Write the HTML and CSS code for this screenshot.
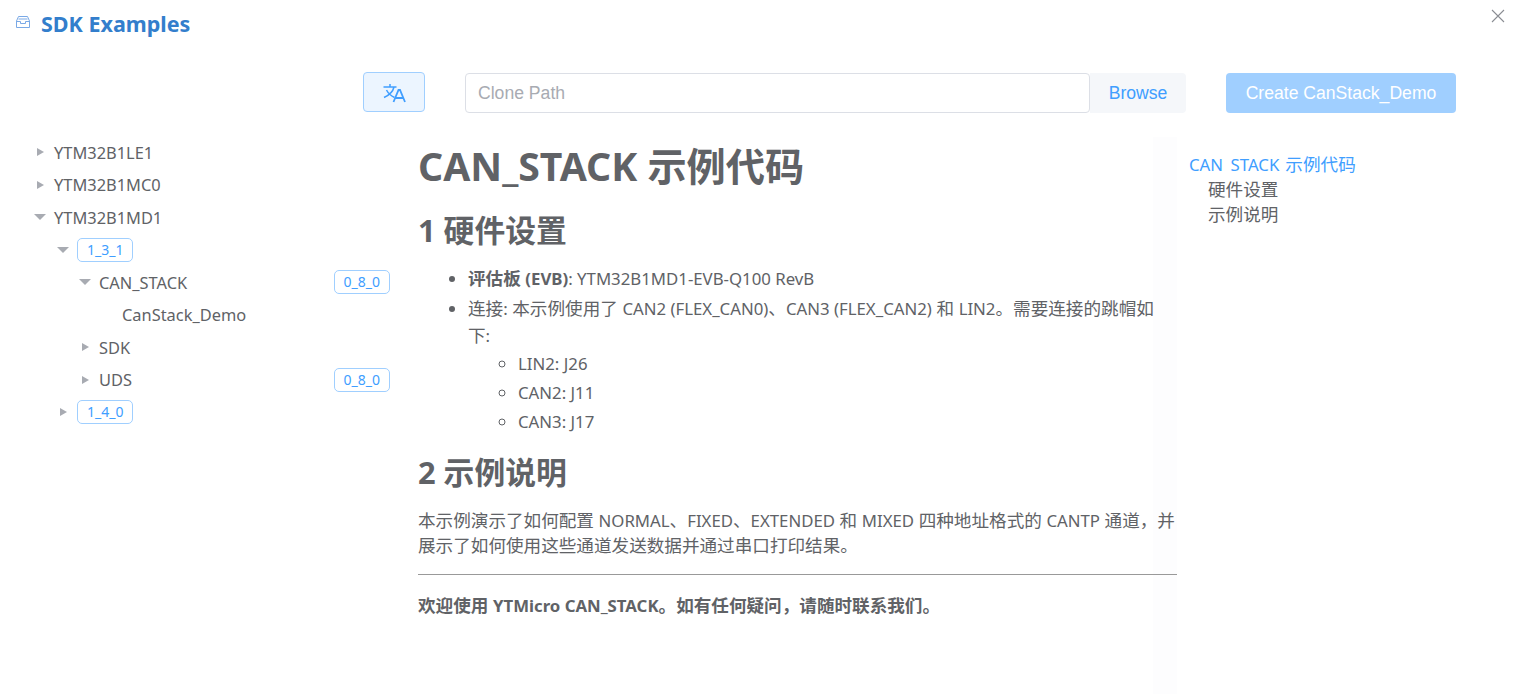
FILE: index.html
```html
<!DOCTYPE html>
<html lang="zh">
<head>
<meta charset="utf-8">
<title>SDK Examples</title>
<link rel="stylesheet" href="styles.css">
</head>
<body>
<div class="dialog">
  <header class="head">
    <svg class="head-icon" viewBox="0 0 14 12" width="14" height="12"><path d="M2.500 .5h9l2 4.500v6.500H.5V5zM.5 5.500h4v2h5v-2h4M2.500 3h9" fill="none" stroke="#7aa9e6" stroke-width="1"/></svg>
    <h2 class="title">SDK Examples</h2>
    <svg class="close" viewBox="0 0 14 14" width="14" height="14"><path d="M1 1l12 12M13 1L1 13" stroke="#8a8d93" stroke-width="1.100" fill="none"/></svg>
  </header>
  <div class="toolbar">
    <button class="lang">
      <svg viewBox="0 0 24 24" width="24" height="24"><path d="M1.500 7h13M8 4v3M12 7c-1 4.500-4.500 8-10 10.500M4.500 10c1.500 3 4 5.500 8 7.500" fill="none" stroke="#409eff" stroke-width="1.500"/><path d="M11.500 22L16.500 10h1.500l5 12M13.500 18h8" fill="none" stroke="#409eff" stroke-width="1.800"/></svg>
    </button>
    <div class="path-group">
      <input class="path" placeholder="Clone Path">
      <button class="browse">Browse</button>
    </div>
    <button class="create">Create CanStack_Demo</button>
  </div>
  <main class="body">
    <nav class="tree">
      <div class="row d0"><i class="caret"></i><span>YTM32B1LE1</span></div>
      <div class="row d0"><i class="caret"></i><span>YTM32B1MC0</span></div>
      <div class="row d0"><i class="caret open"></i><span>YTM32B1MD1</span></div>
      <div class="row d1"><i class="caret open"></i><span class="tag">1_3_1</span></div>
      <div class="row d2"><i class="caret open"></i><span>CAN_STACK</span><span class="tag end">0_8_0</span></div>
      <div class="row d3"><i class="caret none"></i><span>CanStack_Demo</span></div>
      <div class="row d2"><i class="caret"></i><span>SDK</span></div>
      <div class="row d2"><i class="caret"></i><span>UDS</span><span class="tag end">0_8_0</span></div>
      <div class="row d1"><i class="caret"></i><span class="tag">1_4_0</span></div>
    </nav>
    <article class="doc">
      <h1>CAN_STACK 示例代码</h1>
      <h2>1 硬件设置</h2>
      <ul>
        <li><strong>评估板 <span class="en">(EVB)</span></strong><span class="en">: YTM32B1MD1-EVB-Q100 RevB</span></li>
        <li>连接<span class="en">:</span> 本示例使用了 <span class="en">CAN2 (FLEX_CAN0)</span>、<span class="en">CAN3 (FLEX_CAN2)</span> 和 <span class="en">LIN2</span>。需要连接的跳帽如<br>下<span class="en">:</span>
          <ul>
            <li class="en">LIN2: J26</li>
            <li class="en">CAN2: J11</li>
            <li class="en">CAN3: J17</li>
          </ul>
        </li>
      </ul>
      <h2 class="second">2 示例说明</h2>
      <p>本示例演示了如何配置 <span class="en">NORMAL</span>、<span class="en">FIXED</span>、<span class="en">EXTENDED</span> 和 <span class="en">MIXED</span> 四种地址格式的 <span class="en">CANTP</span> 通道，并展示了如何使用这些通道发送数据并通过串口打印结果。</p>
      <hr>
      <p class="closing"><strong>欢迎使用 <span class="en">YTMicro CAN_STACK</span>。如有任何疑问，请随时联系我们。</strong></p>
    </article>
    <aside class="toc">
      <a class="active"><span class="en">CAN<span class="rule-hidden">_</span>STACK</span> 示例代码</a>
      <a class="sub">硬件设置</a>
      <a class="sub">示例说明</a>
    </aside>
  </main>
</div>
</body>
</html>
```

FILE: styles.css
```css
* { box-sizing: border-box; }
html, body { margin: 0; height: 100%; overflow: hidden; background: #fff; }
body { font-family: "Noto Sans", "Noto Sans CJK SC", sans-serif; color: #606266; font-size: 16px; }
.dialog { width: 1517px; height: 694px; display: flex; flex-direction: column; }
.head { position: relative; height: 72px; display: flex; align-items: flex-start; padding: 9px 0 0 16px; gap: 11px; }
.head-icon { margin-top: 7px; }
.title { margin: 0; font-size: 21.500px; line-height: 29px; font-weight: 700; color: #337ecc; }
.close { position: absolute; left: 1491px; top: 9px; }
.toolbar { height: 41px; display: flex; align-items: flex-start; padding-left: 363px; font-family: "Liberation Sans", sans-serif; }
.lang { width: 62px; height: 40px; padding: 0; background: #ecf5ff; border: 1px solid #a0cfff; border-radius: 4px; display: flex; align-items: center; justify-content: center; }
.path-group { display: flex; margin: 1px 0 0 40px; width: 721px; height: 40px; }
.path { flex: 1; min-width: 0; height: 40px; border: 1px solid #dcdfe6; border-radius: 4px; padding: 0 12px; font: 17.600px "Liberation Sans", sans-serif; color: #606266; outline: none; }
.path::placeholder { color: #a8abb2; opacity: 1; }
.browse { width: 96px; height: 40px; border: 0; background: #f5f7fa; color: #409eff; border-radius: 0 4px 4px 0; font: 17.600px "Liberation Sans", sans-serif; padding: 0; }
.create { margin: 1px 0 0 40px; width: 230px; height: 40px; border: 0; border-radius: 4px; background: #a0cfff; color: #fff; font: 17.600px "Liberation Sans", sans-serif; padding: 0; }
.body { flex: 1; min-height: 0; display: grid; grid-template-columns: 418px 759px 1fr; }
.tree { padding-top: 23px; padding-right: 28px; }
.row { height: 32.500px; display: flex; align-items: center; font-size: 16.400px; color: #606266; }
.d0 { padding-left: 32px; }
.d1 { padding-left: 55px; }
.d2 { padding-left: 77px; }
.d3 { padding-left: 100px; }
.caret { width: 0; height: 0; flex: none; margin-right: 10px; margin-left: 5px; border-style: solid; border-width: 4.500px 0 4.500px 7px; border-color: transparent transparent transparent #a8abb2; }
.caret.open { margin-left: 2px; margin-right: 8px; border-width: 6.500px 6px 0; border-color: #a8abb2 transparent transparent; }
.caret.none { border-color: transparent; }
.tag { height: 24px; line-height: 22px; padding: 0 9px; border: 1px solid #a0cfff; border-radius: 5px; color: #409eff; font-size: 14px; background: #fff; }
.end { margin-left: auto; }
.en { font-size: 16.800px; }
.doc { padding-top: 28px; height: 100%; background: linear-gradient(#fdfdfe, #fdfdfe) no-repeat right bottom / 24px calc(100% - 24px); font-size: 17.600px; }
.doc h1 { margin: 0; font-size: 39.200px; line-height: 50px; font-weight: 700; }
.doc h2 { margin: 19px 0 0; font-size: 30.800px; line-height: 40px; font-weight: 700; }
.doc h2.second { margin-top: 17px; }
.doc ul { margin: 15px 0 0; padding-left: 50px; line-height: 26px; }
.doc ul ul { margin: 0; }
.doc li + li { margin-top: 3px; }
.doc ul ul li:first-child { margin-top: 2px; }
.doc p { margin: 16px 0 0; line-height: 25px; }
.doc hr { margin: 16px 0 0; border: 0; border-top: 1px solid #999; }
.doc p.closing { margin-top: 18px; }
.doc strong { font-weight: 700; }
.toc { padding: 39px 0 0 12px; display: flex; flex-direction: column; }
.toc a { font-size: 17.600px; line-height: 25px; color: #606266; }
.toc .active { color: #409eff; word-spacing: 1.500px; }
.rule-hidden { color: transparent; }
.toc .sub { padding-left: 19px; }
```
